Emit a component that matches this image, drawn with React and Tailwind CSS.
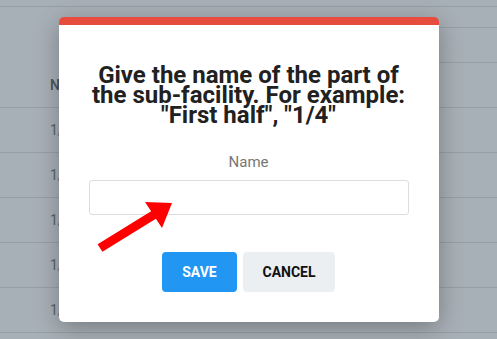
import React from 'react';

const rows = ['1/2', '1/2', '1/4', '1/4', '1/4'];

export default function App() {
  return (
    <div className="relative h-[339px] overflow-hidden bg-[#a8b0b7] font-['Roboto',sans-serif]">
      {/* page behind the dialog */}
      <div className="h-[7px] border-b border-[#979fa6]" />
      <div className="flex h-[101px] border-b border-[#979fa6]">
        <div className="flex-1 pl-[50px] pt-[68px] text-[14px] leading-[20px] font-medium text-[#4c545b]">
          Name
        </div>
        <div className="w-[58px]">
          <div className="h-[21px] border-b border-[#979fa6]" />
          <div className="h-[35px] border-b border-[#979fa6]" />
        </div>
      </div>
      {rows.map((r, i) => (
        <div
          key={i}
          className="flex h-[45px] items-center border-b border-[#979fa6] pl-[50px] text-[14px] text-[#5b636a]"
        >
          {r}
        </div>
      ))}

      {/* dialog */}
      <div className="absolute inset-0 flex justify-center pt-[17px]">
        <div className="flex h-[305px] w-[380px] flex-col items-center rounded-[5px] border-t-[8px] border-[#e74c3c] bg-white px-[30px] pt-[40px] pb-[30px] shadow-[0_6px_24px_rgba(0,0,0,0.3)]">
          <h2 className="text-center text-[24px] leading-[20px] font-bold text-[#212121]">
            Give the name of the part of the sub-facility. For example: "First half", "1/4"
          </h2>
          <label className="mt-[27px] text-[15px] leading-[20px] text-[#777777]">Name</label>
          <input
            type="text"
            className="mt-[8px] h-[35px] w-full rounded-[3px] border border-[#dddddd] bg-white px-3 text-[15px] outline-none"
          />
          <div className="mt-[37px] flex gap-[6px]">
            <button className="h-[40px] w-[75px] rounded-[4px] bg-[#2196f3] text-[14px] font-bold text-white">
              SAVE
            </button>
            <button className="h-[40px] w-[92px] rounded-[4px] bg-[#eceff1] text-[14px] font-bold text-[#111111]">
              CANCEL
            </button>
          </div>
        </div>
      </div>

      {/* annotation arrow */}
      <svg className="pointer-events-none absolute left-0 top-0" width="497" height="339" viewBox="0 0 497 339">
        <polygon
          fill="#ff0000"
          points="97.6,244.2 151.1,211.2 145,202 172,203 162,228 155.9,218.8 102.4,251.8"
        />
      </svg>
    </div>
  );
}
